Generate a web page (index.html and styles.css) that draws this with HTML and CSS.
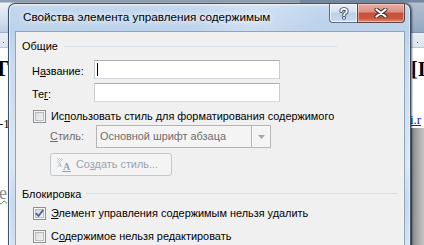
FILE: index.html
```html
<!DOCTYPE html>
<html lang="ru">
<head>
<meta charset="utf-8">
<title>Свойства элемента управления содержимым</title>
<link rel="stylesheet" href="styles.css">
</head>
<body>
<div class="desk">
  <div class="ribbon"></div>
  <div class="ruler"><span class="tick tick-l"></span><span class="tick tick-r"></span></div>
  <div class="page">
    <span class="frag f-big">ТС</span>
    <span class="frag f-num">-1</span>
    <span class="frag f-e">е</span>
    <span class="frag f-br">[I</span>
    <span class="frag f-link">i.r</span>
    <div class="gutter"></div>
  </div>
</div>

<div class="dialog">
  <div class="titlebar">
    <span class="title">Свойства элемента управления содержимым</span>
    <div class="caption-btns">
      <div class="cbtn help">
        <svg width="12" height="13" viewBox="0 0 12 13">
          <path d="M3.2 4.2 C3.2 1.2 8.8 1.2 8.8 4.2 C8.8 6.4 6 6.2 6 8.2 M6 10.6 V11" fill="none" stroke="#3b4b60" stroke-width="3.6" stroke-linecap="round" stroke-linejoin="round"/>
          <path d="M3.2 4.2 C3.2 1.2 8.8 1.2 8.8 4.2 C8.8 6.4 6 6.2 6 8.2 M6 10.6 V11" fill="none" stroke="#ffffff" stroke-width="1.8" stroke-linecap="round" stroke-linejoin="round"/>
        </svg>
      </div>
      <div class="cbtn close">
        <svg width="14" height="10" viewBox="0 0 14 10">
          <path d="M2.5 1.5 L11.5 8.5 M11.5 1.5 L2.5 8.5" fill="none" stroke="#4a3434" stroke-width="4.2" stroke-linecap="round"/>
          <path d="M2.5 1.5 L11.5 8.5 M11.5 1.5 L2.5 8.5" fill="none" stroke="#ffffff" stroke-width="2.2" stroke-linecap="round"/>
        </svg>
      </div>
    </div>
  </div>

  <div class="client">
    <div class="group-head g1"><span>Общие</span><i class="rule"></i></div>

    <div class="field f-name">
      <label class="lbl">Н<u>а</u>звание:</label>
      <div class="input"><i class="caret"></i></div>
    </div>
    <div class="field f-tag">
      <label class="lbl">Те<u>г</u>:</label>
      <div class="input"></div>
    </div>

    <div class="check c1">
      <span class="box"></span>
      <span class="ctext">Ис<u>п</u>ользовать стиль для форматирования содержимого</span>
    </div>

    <div class="field f-style">
      <label class="lbl dis"><u>С</u>тиль:</label>
      <div class="combo">
        <span class="combo-text">Основной шрифт абзаца</span>
        <span class="drop">
          <svg width="7" height="4" viewBox="0 0 7 4"><path d="M0 0 H7 L3.5 4 Z" fill="#a6a6a6"/></svg>
        </span>
      </div>
    </div>

    <div class="btnrow">
      <div class="btn">
        <svg class="sicon" width="15" height="14" viewBox="0 0 15 14">
          <g fill="#c6cfd9">
            <rect x="0" y="0" width="1" height="1"/><rect x="2" y="0" width="1" height="1"/><rect x="4" y="0" width="1" height="1"/>
            <rect x="1" y="1" width="1" height="1"/><rect x="3" y="1" width="1" height="1"/><rect x="5" y="1" width="1" height="1"/>
            <rect x="0" y="2" width="1" height="1"/><rect x="2" y="2" width="1" height="1"/><rect x="4" y="2" width="1" height="1"/>
            <rect x="1" y="3" width="1" height="1"/><rect x="3" y="3" width="1" height="1"/>
            <rect x="0" y="4" width="1" height="1"/><rect x="2" y="4" width="1" height="1"/>
          </g>
          <text x="0" y="9" font-family="Liberation Serif, serif" font-size="7" font-weight="bold" fill="#b3bfcc">A</text>
          <text x="6" y="12" font-family="Liberation Serif, serif" font-size="10" font-weight="bold" fill="#8fa3bb">A</text>
          <rect x="5" y="13" width="9" height="1" fill="#8fa3bb"/>
        </svg>
        <span class="btn-text">Со<u>з</u>дать стиль...</span>
      </div>
    </div>

    <div class="group-head g2"><span>Блокировка</span><i class="rule"></i></div>

    <div class="check c2">
      <span class="box">
        <svg width="11" height="11" viewBox="0 0 11 11"><path d="M2.3 5.6 L4.5 8 L8.8 2.4" fill="none" stroke="#4c6395" stroke-width="1.8" stroke-linecap="round" stroke-linejoin="round"/></svg>
      </span>
      <span class="ctext"><u>Э</u>лемент управления содержимым нельзя удалить</span>
    </div>
    <div class="check c3">
      <span class="box"></span>
      <span class="ctext">С<u>о</u>держимое нельзя редактировать</span>
    </div>
  </div>
</div>
</body>
</html>
```

FILE: styles.css
```css
* { box-sizing: border-box; margin: 0; padding: 0; }

html, body {
  width: 424px;
  height: 245px;
  overflow: hidden;
}

body {
  position: relative;
  background: #ffffff;
  font-family: "Liberation Sans", Arial, sans-serif;
  font-size: 10.9px;
  color: #000000;
}

u { text-decoration: underline; text-underline-offset: 1px; }

/* ---------- background document window ---------- */
.desk {
  position: absolute;
  inset: 0;
  display: flex;
  flex-direction: column;
}

.ribbon {
  height: 33px;
  background:
    linear-gradient(to right, transparent 0 300px, rgba(70, 95, 130, 0.35) 300px),
    linear-gradient(#8d9db2 0, #8d9db2 2px, #eef2f7 3px, #e2eaf4 9px, #cdddee 22px, #bccde2 32px, #7f93ad 33px);
}

.ruler {
  position: relative;
  height: 15px;
  background: linear-gradient(#e9eef4, #dce4ee);
  border-bottom: 1px solid #b9c8da;
}

.tick {
  position: absolute;
  top: 9px;
  width: 1px;
  height: 1px;
  background: #5a5a5a;
}
.tick-l { left: 3px; }
.tick-r { left: 417px; }

.page {
  position: relative;
  flex: 1;
  background: #ffffff;
}

.frag {
  position: absolute;
  font-family: "Liberation Serif", serif;
  color: #000;
  white-space: nowrap;
}
.f-big { left: -7px; top: 7px; font-size: 24px; font-weight: bold; }
.f-num { left: -1px; top: 68px; font-size: 13px; }
.f-e {
  left: -1px; top: 135px; font-size: 18px; color: #8a8a8a;
  text-decoration: underline wavy #2e9a2e;
  text-decoration-thickness: 1px;
}
.f-br { left: 411px; top: 10px; font-size: 20px; font-weight: bold; }
.f-link { left: 410px; top: 64px; font-size: 13px; color: #1a1ae0; text-decoration: underline; }

.gutter {
  position: absolute;
  left: 410px;
  top: 80px;
  width: 14px;
  bottom: 0;
  background: linear-gradient(to right, #555 0, #8c8c8c 3px, #aaaaaa 8px, #c4c4c4 14px);
}

/* ---------- dialog ---------- */
.dialog {
  position: absolute;
  left: 8px;
  top: 3px;
  width: 403px;
  height: 252px;
  display: flex;
  flex-direction: column;
  padding: 0 5px 0 6px;
  border: 1px solid rgba(38, 55, 80, 0.85);
  border-bottom: none;
  border-radius: 7px 7px 0 0;
  background:
    linear-gradient(100deg, rgba(255,255,255,0.0) 0 40%, rgba(255,255,255,0.25) 55%, rgba(255,255,255,0) 70%),
    linear-gradient(#d3e2f3 0, #c2d7ee 4px, #bcd2eb 26px, #c9dbef 60px, #dbe7f4 160px, #c6d9ee 200px, #d8e5f3 252px);
  box-shadow: inset 0 0 0 1px rgba(255, 255, 255, 0.55), 1px 0 2px rgba(0, 0, 0, 0.55);
}

.titlebar {
  height: 27px;
  flex: none;
  display: flex;
  justify-content: space-between;
  align-items: flex-start;
  padding-left: 8px;
}

.title {
  padding-top: 5px;
  font-size: 11.7px;
  line-height: 16px;
  color: #000;
  white-space: nowrap;
  text-shadow: 0 0 6px #ffffff, 0 0 10px rgba(255, 255, 255, 0.9);
}

.caption-btns {
  display: flex;
  height: 19px;
}

.cbtn {
  height: 19px;
  display: flex;
  align-items: center;
  justify-content: center;
  border: 1px solid #5b6e86;
  border-top: none;
}
.cbtn svg { display: block; }

.help {
  width: 28px;
  border-right: none;
  border-radius: 0 0 0 4px;
  background: linear-gradient(#e6eef8 0, #d4e2f2 45%, #bccfe6 50%, #c5d7ec 85%, #d7e5f4 100%);
  box-shadow: inset 0 0 0 1px rgba(255, 255, 255, 0.6);
}

.close {
  width: 48px;
  border-color: #5e4548;
  border-radius: 0 0 4px 0;
  background: linear-gradient(#e9b1a6 0, #dc8e80 45%, #c6503c 50%, #c9583f 80%, #e0907a 100%);
  box-shadow: inset 0 0 0 1px rgba(255, 220, 210, 0.5);
}

/* ---------- client area ---------- */
.client {
  flex: 1;
  display: flex;
  flex-direction: column;
  background: #f0f0f0;
  border: 1px solid #8ea3bd;
}

.group-head {
  display: flex;
  align-items: flex-start;
  height: 15px;
  line-height: 15px;
  padding-left: 6px;
  gap: 6px;
  white-space: nowrap;
}
.group-head .rule {
  flex: 1;
  height: 1px;
  background: #d5dfe5;
}
.g1 { margin-top: 7px; padding-right: 67px; }
.g1 .rule { margin-top: 7px; }
.g2 { margin-top: 11px; padding-right: 7px; gap: 5px; }
.g2 .rule { margin-top: 6px; }

.field {
  display: flex;
  align-items: flex-start;
  padding-left: 16px;
}
.lbl {
  width: 62px;
  line-height: 15px;
  padding-top: 4px;
  white-space: nowrap;
}
.f-name { margin-top: 6px; height: 19px; }
.f-tag { margin-top: 4px; height: 19px; }

.input {
  position: relative;
  width: 186px;
  height: 19px;
  background: #ffffff;
  border: 1px solid #abadb3;
  border-color: #abadb3 #c8cbd0 #d5d8dc #c8cbd0;
}
.caret {
  position: absolute;
  left: 2px;
  top: 2px;
  width: 1px;
  height: 13px;
  background: #000;
}

.check {
  display: flex;
  align-items: flex-start;
  gap: 5px;
  padding-left: 17px;
  line-height: 15px;
  height: 15px;
  white-space: nowrap;
}
.c1 { margin-top: 7px; }
.c2 { margin-top: 4px; }
.c3 { margin-top: 8px; }

.box {
  flex: none;
  width: 13px;
  height: 13px;
  margin-top: 1px;
  border: 1px solid #8e8f8f;
  background: linear-gradient(135deg, #cfd1d4 0%, #e6e7e8 50%, #f7f7f7 100%);
  box-shadow: inset 0 0 0 1px #f6f6f6, inset 0 0 0 2px #b9bcc0;
}
.box svg { display: block; }

.f-style {
  margin-top: 1px;
  padding-left: 34px;
  height: 23px;
}
.f-style .lbl { width: 46px; padding-top: 4px; }
.dis { color: #6d6d6d; }

.combo {
  width: 175px;
  height: 23px;
  display: flex;
  border: 1px solid #b4b4b4;
  background: #f4f4f4;
  color: #6d6d6d;
}
.combo-text {
  flex: 1;
  padding-left: 3px;
  padding-top: 3px;
  line-height: 15px;
  white-space: nowrap;
}
.drop {
  width: 19px;
  display: flex;
  align-items: center;
  justify-content: center;
  border-left: 1px solid #b4b4b4;
  box-shadow: inset 0 0 0 1px #f9f9f9;
}
.drop svg { display: block; }

.btnrow {
  display: flex;
  margin-top: 5px;
  padding-left: 34px;
}
.btn {
  width: 122px;
  height: 23px;
  display: flex;
  align-items: center;
  gap: 4px;
  padding-left: 6px;
  border: 1px solid #c3c7ca;
  border-radius: 3px;
  background: #f4f4f4;
  color: #97a3b0;
  white-space: nowrap;
}
.sicon { display: block; flex: none; }
.btn-text { line-height: 15px; }
```
